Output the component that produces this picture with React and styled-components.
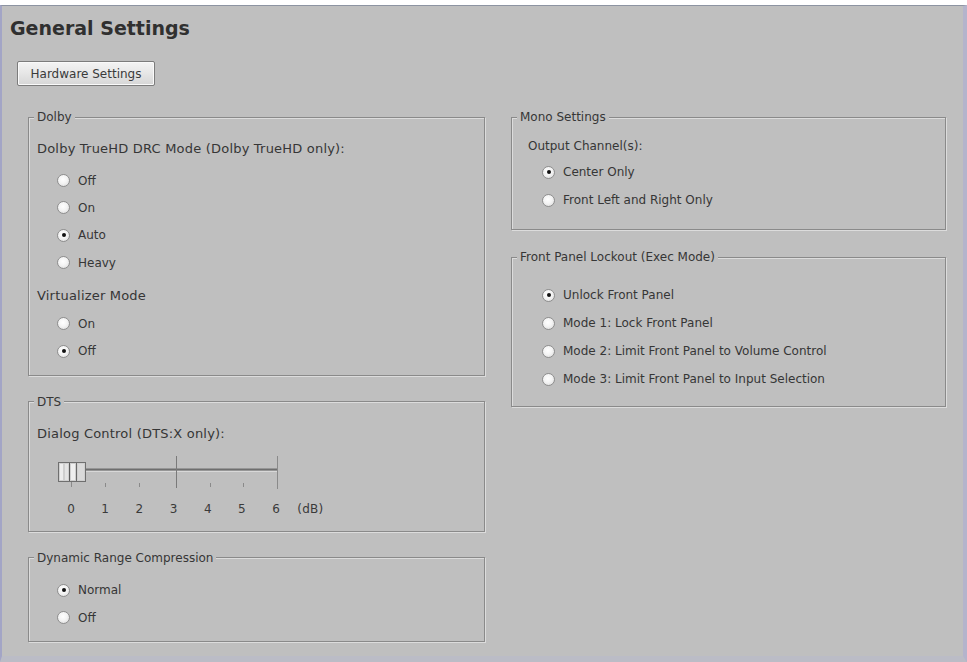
import React from "react";
import styled, { createGlobalStyle } from "styled-components";

const GlobalStyle = createGlobalStyle`
  html, body {
    margin: 0;
    padding: 0;
    background: #ffffff;
  }
  body {
    font-family: "DejaVu Sans", Tahoma, sans-serif;
    font-size: 12px;
    color: #333;
  }
`;

const Frame = styled.div`
  width: 967px;
  height: 662px;
  padding-top: 5px;
  box-sizing: border-box;
  display: flex;
  flex-direction: column;
  background: #fff;
`;

const Window = styled.div`
  flex: 1;
  background: #bfbfbf;
  border-top: 1px solid #8d94a2;
  border-left: 2px solid #a3a5c6;
  border-right: 4px solid #b4b4cc;
  border-bottom: 6px solid #bbbcc6;
  padding: 10px 0 0 8px;
  box-sizing: border-box;
`;

const Title = styled.h1`
  margin: 0;
  font-family: "DejaVu Sans", Tahoma, sans-serif;
  font-weight: bold;
  font-size: 19px;
  line-height: 24px;
  color: #303030;
`;

const Button = styled.button`
  margin: 21px 0 0 7px;
  width: 138px;
  height: 25px;
  padding: 0;
  font-family: "DejaVu Sans", Tahoma, sans-serif;
  font-size: 12px;
  color: #3a3a3a;
  border: 1px solid #7c7c7c;
  border-radius: 2px;
  background: linear-gradient(#f4f4f4, #e6e6e6 50%, #d6d6d6);
  box-shadow: inset 0 0 0 1px #fafafa;
`;

const Columns = styled.div`
  display: flex;
  gap: 26px;
  margin: 23px 0 0 18px;
  align-items: flex-start;
`;

const Column = styled.div`
  width: ${(p) => p.$width}px;
  display: flex;
  flex-direction: column;
  gap: ${(p) => p.$gap}px;
`;

const Group = styled.fieldset`
  margin: 0;
  padding: ${(p) => p.$pad};
  border: 1px solid #8a8a8a;
  box-shadow: inset 1px 1px 0 #dcdcdc, 1px 1px 0 #dcdcdc;
  min-width: 0;
  box-sizing: border-box;
`;

const Legend = styled.legend`
  margin-left: 5px;
  padding: 0 3px;
  line-height: 16px;
  font-size: 12px;
  color: #363636;
  background: #bfbfbf;
`;

const Caption = styled.div`
  height: 24px;
  line-height: 24px;
  padding-left: ${(p) => p.$indent}px;
  margin-top: ${(p) => p.$top || 0}px;
  font-size: ${(p) => p.$size || 12}px;
  letter-spacing: ${(p) => (p.$size ? 0.2 : 0)}px;
  color: #363636;
`;

const Options = styled.div`
  display: flex;
  flex-direction: column;
  margin-top: ${(p) => p.$top || 0}px;
  padding-left: ${(p) => p.$indent}px;
`;

const Option = styled.label`
  display: flex;
  align-items: center;
  gap: 8px;
  height: ${(p) => p.$h}px;
  color: #363636;
`;

const Dot = styled.span`
  position: relative;
  width: 13px;
  height: 13px;
  border-radius: 50%;
  border: 1px solid #8e8e8e;
  box-sizing: border-box;
  background: radial-gradient(circle at 45% 40%, #ffffff 0%, #f4f4f4 45%, #d6d6d6 100%);
  flex: none;

  &::after {
    content: "";
    display: ${(p) => (p.$on ? "block" : "none")};
    position: absolute;
    left: 3.5px;
    top: 3.5px;
    width: 4px;
    height: 4px;
    border-radius: 50%;
    background: #111;
  }
`;

const SliderWrap = styled.div`
  padding-left: 21px;
`;

const Scale = styled.div`
  display: grid;
  grid-template-columns: repeat(8, 34.2px);
  margin: 4px 0 0 4px;
  height: 16px;
  line-height: 16px;
  color: #3a3a3a;
  text-align: center;
  letter-spacing: 0.3px;
`;

function RadioList({ items, checked, indent, h, top }) {
  return (
    <Options $indent={indent} $top={top}>
      {items.map((v) => (
        <Option key={v} $h={h}>
          <Dot $on={v === checked} />
          {v}
        </Option>
      ))}
    </Options>
  );
}

function DialogSlider() {
  return (
    <SliderWrap>
      <svg width="240" height="48" viewBox="0 0 240 48">
        <line x1="35" y1="23.5" x2="227" y2="23.5" stroke="#6e6e6e" strokeWidth="2" />
        <line x1="35" y1="25.5" x2="227" y2="25.5" stroke="#d8d8d8" strokeWidth="1" />
        <line x1="126.5" y1="10" x2="126.5" y2="42" stroke="#7a7a7a" strokeWidth="1" />
        <line x1="227.5" y1="10" x2="227.5" y2="43" stroke="#8a8a8a" strokeWidth="1" />
        {[55, 89, 160, 193].map((x) => (
          <line key={x} x1={x + 0.5} y1="37" x2={x + 0.5} y2="41" stroke="#8a8a8a" strokeWidth="1" />
        ))}
        <rect x="8.5" y="16.5" width="27" height="19" fill="#cfcfcf" stroke="#6f6f6f" />
        <rect x="10" y="18" width="3" height="16" fill="#ededed" />
        <rect x="15" y="18" width="3" height="16" fill="#e4e4e4" />
        <line x1="19.5" y1="17" x2="19.5" y2="35" stroke="#5c5c5c" />
        <rect x="21" y="18" width="4" height="16" fill="#efefef" />
        <line x1="26.5" y1="17" x2="26.5" y2="35" stroke="#6a6a6a" />
        <rect x="28" y="18" width="6" height="16" fill="#dadada" />
        <line x1="21.5" y1="36" x2="21.5" y2="41" stroke="#8a8a8a" />
      </svg>
      <Scale>
        {["0", "1", "2", "3", "4", "5", "6", "(dB)"].map((v) => (
          <span key={v}>{v}</span>
        ))}
      </Scale>
    </SliderWrap>
  );
}

const App = () => {
  return (
    <Frame>
      <GlobalStyle />
      <Window>
        <Title>General Settings</Title>
        <Button>Hardware Settings</Button>
        <Columns>
          <Column $width={457} $gap={18}>
            <Group $pad="12px 0 10px 0">
              <Legend>Dolby</Legend>
              <Caption $indent={8} $size={13}>
                Dolby TrueHD DRC Mode (Dolby TrueHD only):
              </Caption>
              <RadioList items={["Off", "On", "Auto", "Heavy"]} checked="Auto" indent={28} h={27.3} top={6} />
              <Caption $indent={8} $top={8} $size={13}>
                Virtualizer Mode
              </Caption>
              <RadioList items={["On", "Off"]} checked="Off" indent={28} h={27.3} top={2} />
            </Group>
            <Group $pad="12px 0 14px 0">
              <Legend>DTS</Legend>
              <Caption $indent={8} $size={13}>
                Dialog Control (DTS:X only):
              </Caption>
              <DialogSlider />
            </Group>
            <Group $pad="11px 0 10px 0">
              <Legend>Dynamic Range Compression</Legend>
              <RadioList items={["Normal", "Off"]} checked="Normal" indent={28} h={27.3} />
            </Group>
          </Column>
          <Column $width={435} $gap={19}>
            <Group $pad="9px 0 15px 0">
              <Legend>Mono Settings</Legend>
              <Caption $indent={16}>Output Channel(s):</Caption>
              <RadioList items={["Center Only", "Front Left and Right Only"]} checked="Center Only" indent={30} h={28} />
            </Group>
            <Group $pad="16px 0 13px 0">
              <Legend>Front Panel Lockout (Exec Mode)</Legend>
              <RadioList
                items={[
                  "Unlock Front Panel",
                  "Mode 1: Lock Front Panel",
                  "Mode 2: Limit Front Panel to Volume Control",
                  "Mode 3: Limit Front Panel to Input Selection",
                ]}
                checked="Unlock Front Panel"
                indent={30}
                h={28}
              />
            </Group>
          </Column>
        </Columns>
      </Window>
    </Frame>
  );
};

export default App;
